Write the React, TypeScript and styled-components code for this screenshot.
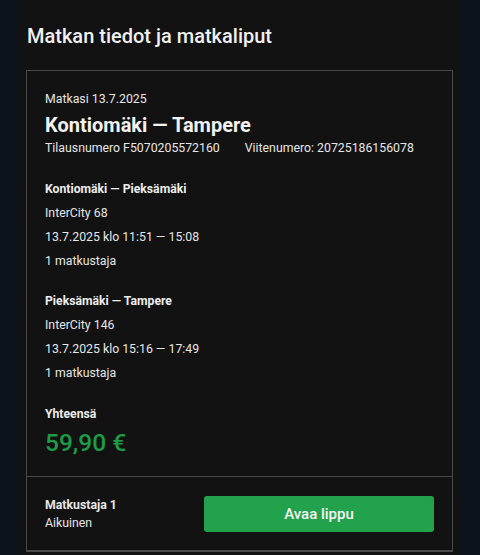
import React from 'react';
import styled, { createGlobalStyle } from 'styled-components';

const GlobalStyle = createGlobalStyle`
  html, body {
    margin: 0;
    padding: 0;
    background: #0d131b;
    font-family: Roboto, 'Liberation Sans', sans-serif;
    color: #e6e6e6;
  }
`;

type Leg = {
  route: string;
  train: string;
  time: string;
  travellers: string;
};

const legs: Leg[] = [
  {
    route: 'Kontiomäki — Pieksämäki',
    train: 'InterCity 68',
    time: '13.7.2025 klo 11:51 — 15:08',
    travellers: '1 matkustaja',
  },
  {
    route: 'Pieksämäki — Tampere',
    train: 'InterCity 146',
    time: '13.7.2025 klo 15:16 — 17:49',
    travellers: '1 matkustaja',
  },
];

export default function App() {
  return (
    <>
      <GlobalStyle />
      <Page>
        <Title>Matkan tiedot ja matkaliput</Title>
        <Card>
          <CardBody>
            <Small>Matkasi 13.7.2025</Small>
            <Route>Kontiomäki — Tampere</Route>
            <Refs>
              <span>Tilausnumero F5070205572160</span>
              <span>Viitenumero: 20725186156078</span>
            </Refs>
            {legs.map((leg) => (
              <LegBlock key={leg.route}>
                <LegTitle>{leg.route}</LegTitle>
                <Line>{leg.train}</Line>
                <Line>{leg.time}</Line>
                <Line>{leg.travellers}</Line>
              </LegBlock>
            ))}
            <Total>
              <LegTitle>Yhteensä</LegTitle>
              <Price>59,90 €</Price>
            </Total>
          </CardBody>
          <Footer>
            <Traveller>
              <strong>Matkustaja 1</strong>
              <span>Aikuinen</span>
            </Traveller>
            <OpenButton>Avaa lippu</OpenButton>
          </Footer>
        </Card>
      </Page>
    </>
  );
}

const Page = styled.div`
  margin: 0 19px 0 18px;
  min-height: 555px;
  box-sizing: border-box;
  background: #121212;
  padding: 24px 8px 0 8px;
`;
const Title = styled.h1`
  margin: 0;
  font-size: 20px;
  line-height: 24px;
  font-weight: 500;
  color: #f0f0f0;
  padding-left: 1px;
`;
const Card = styled.div`
  margin-top: 22px;
  border: 1px solid #4a4a4a;
  border-bottom-width: 2px;
`;
const CardBody = styled.div`
  padding: 19px 18px 16px 18px;
`;
const Small = styled.div`
  font-size: 12.3px;
  line-height: 18px;
`;
const Route = styled.div`
  margin-top: 3px;
  font-size: 20px;
  font-weight: 700;
  line-height: 28px;
  color: #f2f2f2;
`;
const Refs = styled.div`
  display: flex;
  gap: 25px;
  font-size: 12.3px;
  line-height: 18px;
`;
const LegBlock = styled.div`
  margin-top: 20px;
  & + & {
    margin-top: 16px;
  }
`;
const LegTitle = styled.div`
  font-size: 12.2px;
  font-weight: 700;
  line-height: 24px;
  color: #ececec;
`;
const Line = styled.div`
  font-size: 12.3px;
  line-height: 24px;
`;
const Total = styled.div`
  margin-top: 17px;
`;
const Price = styled.div`
  font-size: 24.5px;
  font-weight: 500;
  line-height: 34px;
  color: #1f9a46;
`;
const Footer = styled.div`
  border-top: 1px solid #4a4a4a;
  display: flex;
  align-items: center;
  justify-content: space-between;
  padding: 19px 18px 18px 18px;
`;
const Traveller = styled.div`
  display: flex;
  flex-direction: column;
  font-size: 12.3px;
  line-height: 18px;
  strong {
    font-weight: 700;
  }
`;
const OpenButton = styled.button`
  width: 230px;
  height: 36px;
  border: none;
  border-radius: 3px;
  background: #22a24c;
  color: #f4f4f4;
  font-family: Roboto, 'Liberation Sans', sans-serif;
  font-size: 15px;
  font-weight: 500;
  cursor: pointer;
`;
